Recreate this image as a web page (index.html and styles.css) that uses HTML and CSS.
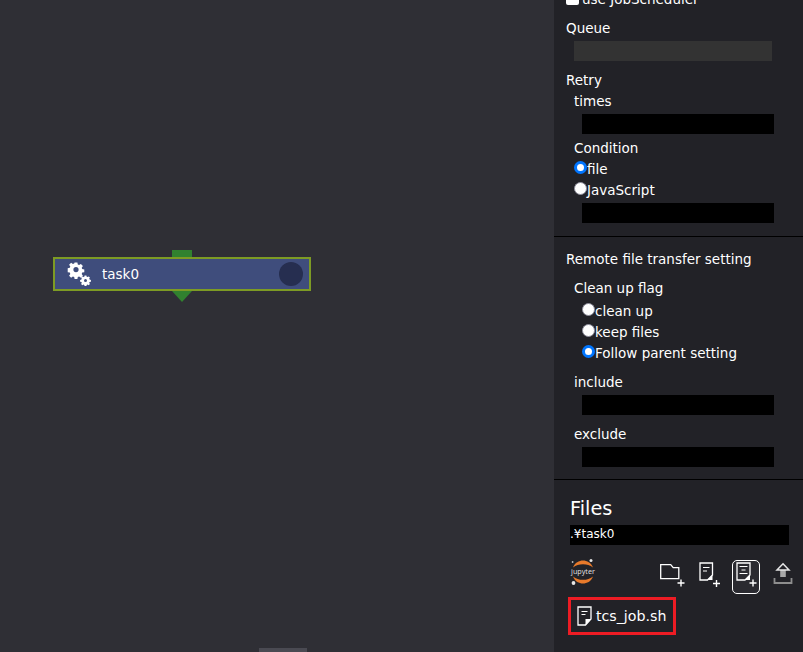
FILE: index.html
```html
<!DOCTYPE html>
<html lang="en">
<head>
<meta charset="utf-8">
<title>Workflow</title>
<link rel="stylesheet" href="styles.css">
</head>
<body>
<div class="app">
  <main class="canvas">
    <div class="node">
      <div class="connector-top"></div>
      <div class="node-body">
        <svg class="gears" viewBox="0 0 24 24" width="24" height="24">
          <g fill="#fff">
            <path fill-rule="evenodd" d="M7.600 0.500h2.800l.4 2.100 1.300.5 1.800-1.200 2 2-1.200 1.800.5 1.300 2.100.4v2.800l-2.100.4-.5 1.300 1.200 1.800-2 2-1.800-1.200-1.300.5-.4 2.100H7.600l-.4-2.100-1.300-.5-1.800 1.200-2-2 1.200-1.800-.5-1.300-2.100-.4V6.200l2.100-.4.5-1.300-1.200-1.800 2-2 1.800 1.200 1.300-.5zM9 5a2.600 2.600 0 1 0 0 5.200A2.600 2.600 0 0 0 9 5z"/>
            <path fill-rule="evenodd" d="M17.600 13.400h1.800l.3 1.300.8.4 1.200-.7 1.200 1.200-.7 1.200.4.8 1.300.3v1.800l-1.300.3-.4.8.7 1.200-1.200 1.200-1.200-.7-.8.4-.3 1.300h-1.800l-.3-1.300-.8-.4-1.200.7-1.200-1.200.7-1.200-.4-.8-1.300-.3v-1.800l1.300-.3.4-.8-.7-1.200 1.200-1.200 1.200.7.8-.4zM18.500 17a1.500 1.500 0 1 0 0 3 1.500 1.500 0 0 0 0-3z"/>
          </g>
        </svg>
        <span class="node-name">task0</span>
        <span class="node-state"></span>
      </div>
      <div class="connector-bottom"></div>
    </div>
    <div class="splitter"></div>
  </main>
  <aside class="panel">
    <section class="sec first">
      <label class="row check-row"><span class="check"></span>use JobScheduler</label>
      <div class="row label queue-label">Queue</div>
      <div class="field gray"></div>
      <div class="row label retry-label">Retry</div>
      <div class="indent">
        <div class="row label">times</div>
        <div class="field black in"></div>
        <div class="row label cond">Condition</div>
        <label class="row radio-row"><span class="radio on"></span>file</label>
        <label class="row radio-row"><span class="radio"></span>JavaScript</label>
        <div class="field black in"></div>
      </div>
    </section>
    <section class="sec second">
      <div class="row label">Remote file transfer setting</div>
      <div class="indent">
        <div class="row label flag">Clean up flag</div>
        <div class="radios">
          <label class="row radio-row"><span class="radio"></span>clean up</label>
          <label class="row radio-row"><span class="radio"></span>keep files</label>
          <label class="row radio-row"><span class="radio on"></span>Follow parent setting</label>
        </div>
        <div class="row label inc">include</div>
        <div class="field black in"></div>
        <div class="row label exc">exclude</div>
        <div class="field black in"></div>
      </div>
    </section>
    <section class="files">
      <h2 class="files-title">Files</h2>
      <div class="path">.¥task0</div>
      <div class="toolbar">
        <svg class="jupyter" viewBox="0 0 26 28" width="26" height="28">
          <circle cx="21" cy="2.600" r="1.500" fill="#e6e6e6"/>
          <circle cx="3.500" cy="25" r="1.900" fill="#e6e6e6"/>
          <circle cx="2.600" cy="4" r="0.900" fill="#bbb"/>
          <path d="M3 9.500C5 4.500 9 2.500 13 2.500s8 2 10 7C20 7 17 6.200 13 6.200S6 7 3 9.500z" fill="#e87a2b"/>
          <path d="M3 18.500c2 5 6 7 10 7s8-2 10-7c-3 2.500-6 3.300-10 3.300S6 21 3 18.500z" fill="#e87a2b"/>
          <text x="13" y="16" class="jupyter-text" text-anchor="middle">jupyter</text>
        </svg>
        <span class="spacer"></span>
        <button class="tool folder">
          <svg viewBox="0 0 26 24" width="26" height="24"><path d="M1.700 1.700h10l2.500 3h5.600v11h-18.100z" fill="none" stroke="#fff" stroke-width="1.300"/><path d="M18.500 20h7M22 16.500v7" stroke="#fff" stroke-width="1.400"/></svg>
        </button>
        <button class="tool file">
          <svg viewBox="0 0 22 26" width="22" height="26"><path d="M1 1h12.500v12l-5 5h-7.500z" fill="none" stroke="#fff" stroke-width="1.300"/><path d="M4 5.500h6.500M4 9h4" stroke="#fff" stroke-width="1.200"/><path d="M8.500 18l5-5v5z" fill="#fff"/><path d="M14 21.500h7M17.500 18v7" stroke="#fff" stroke-width="1.400"/></svg>
        </button>
        <button class="tool batch">
          <svg viewBox="0 0 24 30" width="24" height="30"><path d="M3 1h13v12l-5 5h-8z" fill="none" stroke="#fff" stroke-width="1.300"/><path d="M5.500 4.500h8M7.500 8h4M5.500 11.500h8" stroke="#fff" stroke-width="1.200"/><path d="M11 18l5-5v5z" fill="#fff"/><path d="M15.500 21h7M19 17.500v7" stroke="#fff" stroke-width="1.400"/></svg>
        </button>
        <button class="tool upload">
          <svg viewBox="0 0 20 22" width="20" height="22"><path d="M7.200 8h5.600v7h-5.600z" fill="#a8a8a8"/><path d="M10 1.800l6 6.200h-12z" fill="#222227" stroke="#e6e6e6" stroke-width="1.500"/><path d="M1.500 16v5h17v-5" fill="none" stroke="#8d8d8d" stroke-width="1.800"/></svg>
        </button>
      </div>
      <div class="file-item">
        <svg viewBox="0 0 16 20" width="16" height="20"><path d="M1 1h13v12l-5.500 6H1z" fill="none" stroke="#fff" stroke-width="1.300"/><path d="M4.500 5.500h6M4.500 8.500h4" stroke="#fff" stroke-width="1.200"/><path d="M8.500 19v-6h5.500z" fill="#fff"/></svg>
        <span>tcs_job.sh</span>
      </div>
    </section>
  </aside>
</div>
</body>
</html>
```
FILE: styles.css
```css
* { box-sizing: border-box; }
html, body { margin: 0; height: 100%; }
body {
  background: #2f2f35;
  color: #fff;
  font-family: "DejaVu Sans", "Noto Sans CJK JP", sans-serif;
  font-size: 13.5px;
  overflow: hidden;
}
.app { display: flex; width: 803px; height: 652px; overflow: hidden; }
.canvas { position: relative; width: 554px; background: #2f2f35; flex: none; }
.node { position: absolute; left: 53px; top: 250px; width: 258px; }
.connector-top { width: 20px; height: 7px; margin-left: 119px; background: #31812f; }
.node-body {
  display: flex; align-items: center; height: 34px;
  background: #3f4d7c; border: 2px solid #7d9b24;
  padding: 0 6px 0 12px;
}
.gears { flex: none; }
.node-name { margin-left: 11px; flex: 1; }
.node-state { width: 24px; height: 24px; border-radius: 50%; background: #262e50; }
.connector-bottom {
  width: 0; height: 0; margin-left: 119px;
  border-left: 10px solid transparent; border-right: 10px solid transparent;
  border-top: 11px solid #31812f;
}
.splitter { position: absolute; left: 259px; bottom: 0; width: 48px; height: 4px; background: #4a4a52; }
.panel { width: 249px; height: 652px; background: #222227; flex: none; overflow: hidden; }
.sec { border-bottom: 1px solid #000; padding: 0 12px 0; }
.first { height: 248px; margin-top: -11px; }
.second { height: 243px; padding-top: 11px; }
.row { height: 21px; line-height: 23px; white-space: nowrap; }
.label { display: block; }
.check-row { display: flex; align-items: center; }
.radio-row { display: flex; align-items: flex-start; }
.check { width: 13px; height: 13px; background: #fff; border-radius: 2px; margin: 0 3px 3px 0; flex: none; }
.queue-label { margin-top: 7px; }
.field { height: 20px; }
.gray { width: 198px; margin: 3px 0 0 8px; background: #333333; }
.black { background: #000; }
.in { width: 192px; margin: 3px 0 0 8px; }
.retry-label { margin-top: 8px; }
.indent { padding-left: 8px; }
.cond { margin-top: 3px; }
.radio {
  width: 13px; height: 13px; border-radius: 50%; background: #fff;
  margin-top: 3px; flex: none; border: 1px solid #8f8f9d;
}
.radio.on { border: 3px solid #0075ff; }
.flag { margin-top: 8px; }
.radios { padding-left: 8px; padding-top: 2px; }
.inc { margin-top: 8px; }
.exc { margin-top: 8px; }
.files { padding: 0 14px 0 16px; }
.files-title { margin: 13px 0 0; font-size: 19.3px; font-weight: 400; height: 32px; line-height: 32px; }
.path { width: 219px; height: 20px; line-height: 19px; background: #000; font-size: 12px; }
.toolbar { display: flex; align-items: flex-start; margin-top: 13px; height: 36px; margin-right: -4px; }
.jupyter { flex: none; }
.jupyter-text { fill: #ddd; font-size: 7.200px; font-family: "Noto Sans", sans-serif; }
.spacer { flex: 1; }
.tool {
  display: flex; align-items: center; justify-content: center;
  background: none; border: 0; padding: 0; color: #fff; width: 28px; height: 34px; margin-left: 8px;
}
.folder { height: 24px; margin-top: 5px; }
.file { height: 26px; margin-top: 4px; width: 22px; margin-left: 13px; }
.batch { border: 1px solid #fff; border-radius: 5px; background: #2a2a30; margin-top: 2px; margin-left: 11px; }
.upload { width: 20px; height: 22px; margin-left: 13px; margin-top: 4px; }
.file-item {
  display: flex; align-items: center; gap: 3px;
  width: 108px; height: 38px; margin: 3px 0 0 -2px; padding-left: 6px;
  border: 3px solid #ed1c24; font-size: 14.200px;
}
```
